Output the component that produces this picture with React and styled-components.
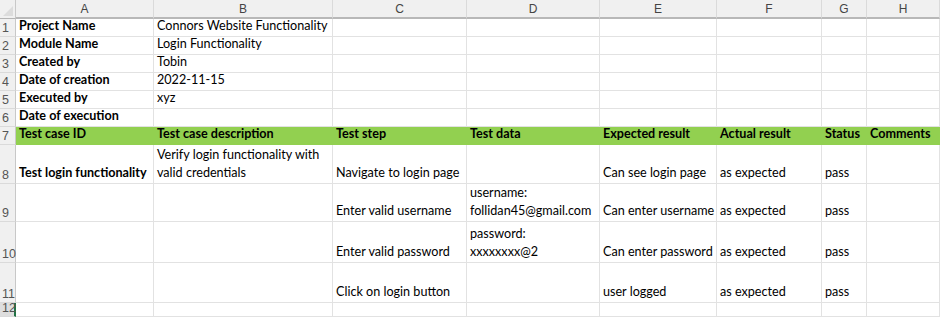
import React from 'react';
import styled, { createGlobalStyle } from 'styled-components';

const GlobalStyle = createGlobalStyle`
  html, body {
    margin: 0;
    padding: 0;
    background: #ffffff;
  }
`;

const COLUMNS = ['A', 'B', 'C', 'D', 'E', 'F', 'G', 'H'];
const COL_WIDTHS = '16px 138px 179px 134px 133px 117px 105px 45px 1fr';
const ROW_HEIGHTS = [18, 18, 18, 18, 18, 18, 18, 39, 38, 41, 40, 14];

const meta = [
  ['Project Name', 'Connors Website Functionality'],
  ['Module Name', 'Login Functionality'],
  ['Created by', 'Tobin'],
  ['Date of creation', '2022-11-15'],
  ['Executed by', 'xyz'],
  ['Date of execution', ''],
];

const heading = [
  'Test case ID',
  'Test case description',
  'Test step',
  'Test data',
  'Expected result',
  'Actual result',
  'Status',
  'Comments',
];

// wrapped cells keep their line breaks as Excel laid them out
const steps = [
  ['Test login functionality', 'Verify login functionality with\nvalid credentials', 'Navigate to login page', '', 'Can see login page', 'as expected', 'pass', ''],
  ['', '', 'Enter valid username', 'username:\nfollidan45@gmail.com', 'Can enter username', 'as expected', 'pass', ''],
  ['', '', 'Enter valid password', 'password:\nxxxxxxxx@2', 'Can enter password', 'as expected', 'pass', ''],
  ['', '', 'Click on login button', '', 'user logged', 'as expected', 'pass', ''],
];

const Sheet = styled.div`
  display: grid;
  grid-template-columns: ${COL_WIDTHS};
  grid-template-rows: 19px ${ROW_HEIGHTS.map((h) => `${h}px`).join(' ')};
  width: 940px;
  height: 317px;
  overflow: hidden;
  font-family: Lato, 'Liberation Sans', sans-serif;
  font-size: 12.6px;
  color: #000000;
`;

const Corner = styled.div`
  background: #f0f0f0;
  border-right: 1px solid #c8c8c8;
  border-bottom: 1px solid #b4b4b4;
  position: relative;

  &::after {
    content: '';
    position: absolute;
    right: 2px;
    bottom: 2px;
    border-left: 10px solid transparent;
    border-bottom: 10px solid #dcdcdc;
  }
`;

const ColHead = styled.div`
  display: flex;
  align-items: center;
  justify-content: center;
  background: #f0f0f0;
  color: #444444;
  font-family: 'Liberation Sans', sans-serif;
  font-size: 12px;
  border-right: 1px solid #dadada;
  border-bottom: 2px solid #b8b8b8;
`;

const RowHead = styled.div`
  display: flex;
  align-items: flex-end;
  padding: 0 0 1px 2px;
  background: ${({ $active }) => ($active ? '#dedede' : '#f0f0f0')};
  color: #555555;
  font-family: 'Liberation Sans', sans-serif;
  font-size: 12.5px;
  border-right: ${({ $active }) => ($active ? '2px solid #217346' : '1px solid #c8c8c8')};
  border-bottom: 1px solid #dadada;
`;

const Cell = styled.div`
  display: flex;
  align-items: flex-end;
  min-width: 0;
  padding: 0 2px 1px 3px;
  line-height: 18px;
  white-space: ${({ $wrap }) => ($wrap ? 'pre-line' : 'nowrap')};
  font-weight: ${({ $bold }) => ($bold ? 700 : 400)};
  background: ${({ $fill }) => $fill || '#ffffff'};
  border-right: 1px solid ${({ $fill }) => $fill || '#e2e2e2'};
  border-bottom: 1px solid ${({ $fill }) => $fill || '#e2e2e2'};
  position: relative;
  z-index: ${({ $spill }) => ($spill ? 1 : 0)};
`;

const GREEN = '#92d050';

const App = () => {
  const rows = [];

  meta.forEach(([label, value], i) => {
    rows.push(
      <React.Fragment key={`m${i}`}>
        <RowHead>{i + 1}</RowHead>
        <Cell $bold>{label}</Cell>
        <Cell $spill>{value}</Cell>
        {COLUMNS.slice(2).map((c) => (
          <Cell key={c} />
        ))}
      </React.Fragment>
    );
  });

  rows.push(
    <React.Fragment key="head">
      <RowHead>7</RowHead>
      {heading.map((h) => (
        <Cell key={h} $bold $fill={GREEN}>
          {h}
        </Cell>
      ))}
    </React.Fragment>
  );

  steps.forEach((step, i) => {
    rows.push(
      <React.Fragment key={`s${i}`}>
        <RowHead>{i + 8}</RowHead>
        {step.map((text, j) => (
          <Cell key={j} $bold={j === 0} $wrap={text.includes('\n')}>
            {text}
          </Cell>
        ))}
      </React.Fragment>
    );
  });

  rows.push(
    <React.Fragment key="last">
      <RowHead $active>12</RowHead>
      {COLUMNS.map((c) => (
        <Cell key={c} />
      ))}
    </React.Fragment>
  );

  return (
    <>
      <GlobalStyle />
      <Sheet>
        <Corner />
        {COLUMNS.map((c) => (
          <ColHead key={c}>{c}</ColHead>
        ))}
        {rows}
      </Sheet>
    </>
  );
};

export default App;
